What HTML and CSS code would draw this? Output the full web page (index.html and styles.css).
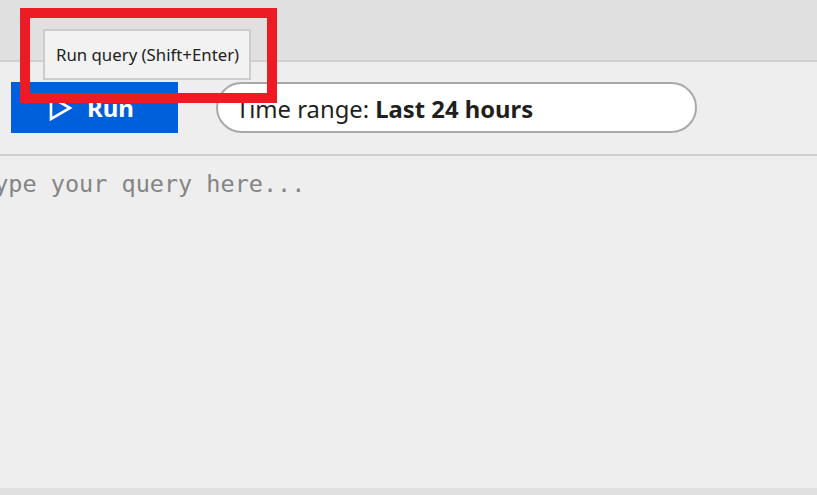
FILE: index.html
```html
<!DOCTYPE html>
<html lang="en">
<head>
<meta charset="utf-8">
<title>Query</title>
<link rel="stylesheet" href="styles.css">
</head>
<body>
<div class="app">
  <header class="topbar"></header>
  <div class="toolbar">
    <button class="run-btn" type="button">
      <svg class="play" width="24" height="26" viewBox="0 0 24 26" aria-hidden="true">
        <path d="M2 2 L21 13 L2 24 Z" fill="none" stroke="#fff" stroke-width="2.6" stroke-linejoin="miter"/>
      </svg>
      <span>Run</span>
    </button>
    <div class="time-pill">Time range: <b>Last 24 hours</b></div>
  </div>
  <div class="editor">Type your query here...</div>
  <footer class="statusbar"></footer>
  <div class="tooltip">Run query (Shift+Enter)</div>
  <div class="highlight"></div>
</div>
</body>
</html>
```
FILE: styles.css
```css
* { box-sizing: border-box; }
html, body { margin: 0; padding: 0; }
body {
  width: 817px;
  height: 495px;
  overflow: hidden;
  background: #eeeeee;
  font-family: "Noto Sans", "Open Sans", sans-serif;
  color: #1f1f1f;
}
.app {
  position: relative;
  height: 495px;
  display: flex;
  flex-direction: column;
}
.topbar {
  height: 62px;
  flex: none;
  background: #e0e0e0;
  border-bottom: 2px solid #d0d0d0;
}
.toolbar {
  height: 94px;
  flex: none;
  display: flex;
  align-items: flex-start;
  gap: 38px;
  padding: 20px 0 0 11px;
  border-bottom: 2px solid #cfcfcf;
}
.run-btn {
  width: 167px;
  height: 51px;
  border: 0;
  background: #005fdb;
  color: #fff;
  display: flex;
  align-items: center;
  padding: 0 0 0 38px;
  gap: 14px;
  font-family: inherit;
  font-size: 24px;
  font-weight: 700;
  cursor: pointer;
}
.play { flex: none; }
.time-pill {
  width: 481px;
  height: 51px;
  border: 2px solid #a9a9a9;
  border-radius: 26px;
  background: #fff;
  display: flex;
  align-items: center;
  padding: 3px 0 0 18px;
  font-size: 23.8px;
  white-space: pre;
  color: #1f1f1f;
}
.time-pill b { font-weight: 700; }
.editor {
  flex: 1;
  padding-top: 12px;
  font-family: "DejaVu Sans Mono", monospace;
  font-size: 23.5px;
  line-height: 32px;
  color: #858585;
  text-indent: -20px;
  white-space: pre;
}
.statusbar {
  height: 7px;
  flex: none;
  background: #e0e0e0;
}
.tooltip {
  position: absolute;
  left: 43px;
  top: 29px;
  width: 208px;
  height: 51px;
  border: 2px solid #cccccc;
  background: #f2f2f2;
  display: flex;
  align-items: center;
  padding-left: 11px;
  font-size: 16.8px;
  color: #222;
  white-space: nowrap;
}
.highlight {
  position: absolute;
  left: 20px;
  top: 8px;
  width: 257px;
  height: 95px;
  border: 10px solid #ed1c24;
}
```
